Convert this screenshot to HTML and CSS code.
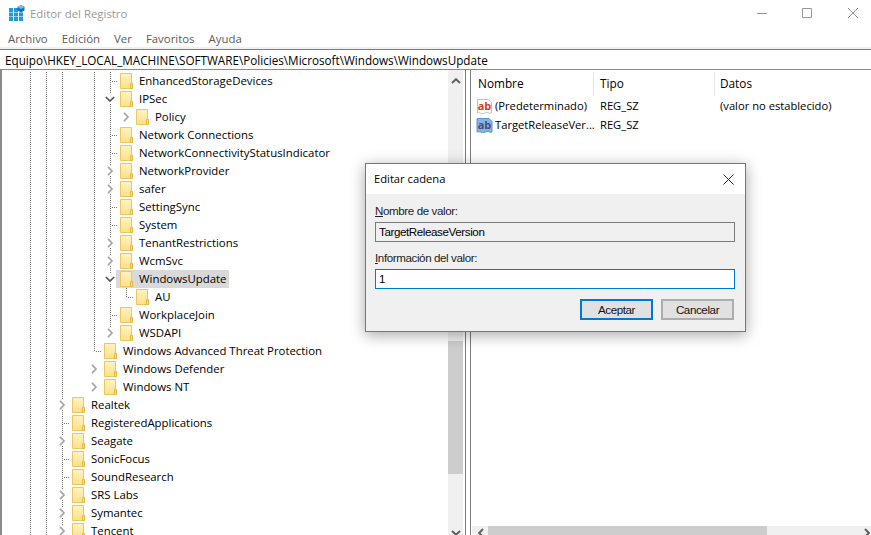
FILE: index.html
```html
<!DOCTYPE html>
<html lang="es">
<head>
<meta charset="utf-8">
<title>Editor del Registro</title>
<link rel="stylesheet" href="styles.css">
</head>
<body>
<svg class="sprite" aria-hidden="true">
  <symbol id="f" viewBox="0 0 13 16">
    <defs><linearGradient id="fg" x1="0" y1="0" x2="0" y2="1"><stop offset="0" stop-color="#fff3c0"/><stop offset="1" stop-color="#fde08a"/></linearGradient></defs>
    <path d="M.5.5h11v15H.5z" fill="url(#fg)" stroke="#ecc65e"/>
    <path d="M10.5 10.5h2v5h-2z" fill="#fbe08c" stroke="#e5b93f"/>
  </symbol>
  <symbol id="c" viewBox="0 0 6 10"><path d="M1 .8 5 5l-4 4.2" fill="none" stroke="#a6a6a6" stroke-width="1.7"/></symbol>
  <symbol id="o" viewBox="0 0 10 6"><path d="M.8 1 5 5l4.2-4" fill="none" stroke="#555" stroke-width="1.7"/></symbol>
</svg>
<div class="window">
  <header class="titlebar">
    <svg class="appicon" width="16" height="16" viewBox="0 0 16 16">
      <path d="M0 3h4v4H0zM5 3h4v4H5zM0 7.500h4v4H0zM5 7.500h4v4H5zM10 7.500h4v4h-4zM0 12h4v4H0zM5 12h4v4H5zM10 12h4v4h-4z" fill="#1f9bd7"/>
      <path d="M12 0 15.500 2v3.500L12 7.500 8.500 5.500V2z" fill="#1f6fb5"/>
      <path d="M12 0 15.500 2 12 4 8.500 2z" fill="#6fc2ee"/>
    </svg>
    <span class="apptitle">Editor del Registro</span>
    <div class="winbtns">
      <svg width="10" height="10" viewBox="0 0 10 10"><path d="M0 5.500h10" stroke="#999"/></svg>
      <svg width="10" height="10" viewBox="0 0 10 10"><path d="M.5.500h9v9h-9z" fill="none" stroke="#999"/></svg>
      <svg class="winclose" width="10" height="10" viewBox="0 0 10 10"><path d="M0 0l10 10M10 0 0 10" stroke="#999"/></svg>
    </div>
  </header>
  <nav class="menubar">
    <span>Archivo</span><span>Edición</span><span>Ver</span><span>Favoritos</span><span>Ayuda</span>
  </nav>
  <div class="address">Equipo\HKEY_LOCAL_MACHINE\SOFTWARE\Policies\Microsoft\Windows\WindowsUpdate</div>
  <main class="panes">
    <section class="treepane">
      <div class="tree">
        <div class="row"><i class="g"></i><i class="g"></i><i class="g"></i><i></i><i class="g"></i><i class="d"></i><span class="item"><svg class="folder"><use href="#f"/></svg><span>EnhancedStorageDevices</span></span></div>
        <div class="row"><i class="g"></i><i class="g"></i><i class="g"></i><i></i><i class="g"></i><i class="a"><svg class="open"><use href="#o"/></svg></i><span class="item"><svg class="folder"><use href="#f"/></svg><span>IPSec</span></span></div>
        <div class="row"><i class="g"></i><i class="g"></i><i class="g"></i><i></i><i class="g"></i><i class="g"></i><i class="n"><svg class="closed"><use href="#c"/></svg></i><span class="item"><svg class="folder"><use href="#f"/></svg><span>Policy</span></span></div>
        <div class="row"><i class="g"></i><i class="g"></i><i class="g"></i><i></i><i class="g"></i><i class="d"></i><span class="item"><svg class="folder"><use href="#f"/></svg><span>Network Connections</span></span></div>
        <div class="row"><i class="g"></i><i class="g"></i><i class="g"></i><i></i><i class="g"></i><i class="d"></i><span class="item"><svg class="folder"><use href="#f"/></svg><span>NetworkConnectivityStatusIndicator</span></span></div>
        <div class="row"><i class="g"></i><i class="g"></i><i class="g"></i><i></i><i class="g"></i><i class="a"><svg class="closed"><use href="#c"/></svg></i><span class="item"><svg class="folder"><use href="#f"/></svg><span>NetworkProvider</span></span></div>
        <div class="row"><i class="g"></i><i class="g"></i><i class="g"></i><i></i><i class="g"></i><i class="a"><svg class="closed"><use href="#c"/></svg></i><span class="item"><svg class="folder"><use href="#f"/></svg><span>safer</span></span></div>
        <div class="row"><i class="g"></i><i class="g"></i><i class="g"></i><i></i><i class="g"></i><i class="d"></i><span class="item"><svg class="folder"><use href="#f"/></svg><span>SettingSync</span></span></div>
        <div class="row"><i class="g"></i><i class="g"></i><i class="g"></i><i></i><i class="g"></i><i class="d"></i><span class="item"><svg class="folder"><use href="#f"/></svg><span>System</span></span></div>
        <div class="row"><i class="g"></i><i class="g"></i><i class="g"></i><i></i><i class="g"></i><i class="a"><svg class="closed"><use href="#c"/></svg></i><span class="item"><svg class="folder"><use href="#f"/></svg><span>TenantRestrictions</span></span></div>
        <div class="row"><i class="g"></i><i class="g"></i><i class="g"></i><i></i><i class="g"></i><i class="a"><svg class="closed"><use href="#c"/></svg></i><span class="item"><svg class="folder"><use href="#f"/></svg><span>WcmSvc</span></span></div>
        <div class="row"><i class="g"></i><i class="g"></i><i class="g"></i><i></i><i class="g"></i><i class="a"><svg class="open"><use href="#o"/></svg></i><span class="item selected"><svg class="folder"><use href="#f"/></svg><span>WindowsUpdate</span></span></div>
        <div class="row"><i class="g"></i><i class="g"></i><i class="g"></i><i></i><i class="g"></i><i class="g"></i><i class="e"></i><span class="item"><svg class="folder"><use href="#f"/></svg><span>AU</span></span></div>
        <div class="row"><i class="g"></i><i class="g"></i><i class="g"></i><i></i><i class="g"></i><i class="d"></i><span class="item"><svg class="folder"><use href="#f"/></svg><span>WorkplaceJoin</span></span></div>
        <div class="row"><i class="g"></i><i class="g"></i><i class="g"></i><i></i><i class="g"></i><i class="al"><svg class="closed"><use href="#c"/></svg></i><span class="item"><svg class="folder"><use href="#f"/></svg><span>WSDAPI</span></span></div>
        <div class="row"><i class="g"></i><i class="g"></i><i class="g"></i><i></i><i class="e"></i><span class="item"><svg class="folder"><use href="#f"/></svg><span>Windows Advanced Threat Protection</span></span></div>
        <div class="row"><i class="g"></i><i class="g"></i><i class="g"></i><i></i><i class="n"><svg class="closed"><use href="#c"/></svg></i><span class="item"><svg class="folder"><use href="#f"/></svg><span>Windows Defender</span></span></div>
        <div class="row"><i class="g"></i><i class="g"></i><i class="g"></i><i></i><i class="n"><svg class="closed"><use href="#c"/></svg></i><span class="item"><svg class="folder"><use href="#f"/></svg><span>Windows NT</span></span></div>
        <div class="row"><i class="g"></i><i class="g"></i><i class="a"><svg class="closed"><use href="#c"/></svg></i><span class="item"><svg class="folder"><use href="#f"/></svg><span>Realtek</span></span></div>
        <div class="row"><i class="g"></i><i class="g"></i><i class="d"></i><span class="item"><svg class="folder"><use href="#f"/></svg><span>RegisteredApplications</span></span></div>
        <div class="row"><i class="g"></i><i class="g"></i><i class="a"><svg class="closed"><use href="#c"/></svg></i><span class="item"><svg class="folder"><use href="#f"/></svg><span>Seagate</span></span></div>
        <div class="row"><i class="g"></i><i class="g"></i><i class="d"></i><span class="item"><svg class="folder"><use href="#f"/></svg><span>SonicFocus</span></span></div>
        <div class="row"><i class="g"></i><i class="g"></i><i class="d"></i><span class="item"><svg class="folder"><use href="#f"/></svg><span>SoundResearch</span></span></div>
        <div class="row"><i class="g"></i><i class="g"></i><i class="a"><svg class="closed"><use href="#c"/></svg></i><span class="item"><svg class="folder"><use href="#f"/></svg><span>SRS Labs</span></span></div>
        <div class="row"><i class="g"></i><i class="g"></i><i class="a"><svg class="closed"><use href="#c"/></svg></i><span class="item"><svg class="folder"><use href="#f"/></svg><span>Symantec</span></span></div>
        <div class="row"><i class="g"></i><i class="g"></i><i class="a"><svg class="closed"><use href="#c"/></svg></i><span class="item"><svg class="folder"><use href="#f"/></svg><span>Tencent</span></span></div>
      </div>
      <div class="vscroll">
        <svg class="arrow" width="10" height="6" viewBox="0 0 10 6"><path d="M1 5 5 1.200 9 5" fill="none" stroke="#606060" stroke-width="2"/></svg>
        <div class="vthumb"></div>
        <svg class="arrow arrow-down" width="10" height="6" viewBox="0 0 10 6"><path d="M1 1 5 4.800 9 1" fill="none" stroke="#606060" stroke-width="2"/></svg>
      </div>
    </section>
    <section class="listpane">
      <div class="listhead">
        <div class="col col-name">Nombre</div>
        <div class="col col-type">Tipo</div>
        <div class="col col-data">Datos</div>
      </div>
      <div class="listrow">
        <div class="cell-name">
          <svg class="valicon" width="17" height="17" viewBox="0 0 17 17"><path d="M1.500 1.500h11l3 3v10.500c-2 1-3-.8-5-.5s-2.500 1.500-4.500 1-3-1-4.500-.5z" fill="#fff" stroke="#c0c0c0"/><text x="8.500" y="12" class="abred" text-anchor="middle">ab</text></svg>
          <span>(Predeterminado)</span>
        </div>
        <div>REG_SZ</div>
        <div>(valor no establecido)</div>
      </div>
      <div class="listrow">
        <div class="cell-name">
          <svg class="valicon" width="17" height="17" viewBox="0 0 17 17"><path d="M1 1.500h12l3 3v10.500c-2 1-3-.8-5-.5s-2.500 1.500-4.500 1-3.500-1-5.500-.5z" fill="#82b5e6" stroke="#5f93c8"/><text x="8.500" y="12" class="abblue" text-anchor="middle">ab</text></svg>
          <span>TargetReleaseVer...</span>
        </div>
        <div>REG_SZ</div>
        <div></div>
      </div>
      <div class="hscroll">
        <svg width="6" height="9" viewBox="0 0 6 9" class="harrow"><path d="M5 1 1.200 5 5 9" fill="none" stroke="#606060" stroke-width="2"/></svg>
        <div class="hthumb"></div>
        <svg width="6" height="9" viewBox="0 0 6 9" class="harrow harrow-r"><path d="M1 1 4.800 5 1 9" fill="none" stroke="#606060" stroke-width="2"/></svg>
      </div>
    </section>
  </main>
  <div class="dialog" role="dialog">
    <div class="dlgtitle">
      <span>Editar cadena</span>
      <svg width="11" height="11" viewBox="0 0 11 11"><path d="M.5.500l10 10M10.500.500l-10 10" stroke="#222" stroke-width="1"/></svg>
    </div>
    <div class="dlgbody">
      <label class="lbl"><u>N</u>ombre de valor:</label>
      <div class="field field-ro">TargetReleaseVersion</div>
      <label class="lbl lbl2"><u>I</u>nformación del valor:</label>
      <div class="field field-on">1</div>
      <div class="btnrow">
        <button class="btn btn-default">Aceptar</button>
        <button class="btn">Cancelar</button>
      </div>
    </div>
  </div>
</div>
</body>
</html>
```
FILE: styles.css
```css
* { box-sizing: border-box; }
html, body { margin: 0; height: 100%; overflow: hidden; background: #fff; }
body { font: 11.4px/16px "Open Sans", "Noto Sans", sans-serif; color: #000; }
.sprite { width: 0; height: 0; display: block; }
.window { position: relative; height: 535px; display: flex; flex-direction: column; overflow: hidden; }

.titlebar { height: 30px; display: flex; align-items: flex-start; padding: 5px 13px 0 9px; flex: none; }
.appicon { flex: none; }
.apptitle { margin-left: 5px; color: #999; line-height: 18px; }
.winbtns { margin-left: auto; display: flex; gap: 35px; padding-top: 3px; margin-right: 0; }
.winclose { margin-left: 1px; }

.menubar { height: 19px; display: flex; gap: 14px; padding: 0 0 0 8px; color: #5c5c5c; line-height: 18px; flex: none; border-bottom: 2px solid #f0f0f0; }

.address { height: 21px; flex: none; border-top: 1px solid #7c7c7c; border-bottom: 1px solid #8c8c8c; padding-left: 5px; font-size: 11.7px; line-height: 20px; color: #000; white-space: nowrap; }

.panes { flex: 1; min-height: 0; display: flex; }

.treepane { width: 466px; flex: none; display: flex; border-left: 2px solid #8a8a8a; border-right: 1px solid #7c7c7c; padding-right: 2px; }
.tree { flex: 1; min-width: 0; padding: 2px 0 0 20px; overflow: hidden; }
.row { height: 18px; display: flex; white-space: nowrap; }
.row > i { width: 16px; flex: none; height: 18px; display: flex; align-items: center; justify-content: center; }
.g, .d, .a { background: repeating-linear-gradient(#777 0 1px, transparent 1px 2px) no-repeat 8px 0 / 1px 100%; }
.d { background:
  repeating-linear-gradient(90deg, #777 0 1px, transparent 1px 2px) no-repeat 10px 9px / 6px 1px,
  repeating-linear-gradient(#777 0 1px, transparent 1px 2px) no-repeat 8px 0 / 1px 100%; }
.e { background:
  repeating-linear-gradient(90deg, #777 0 1px, transparent 1px 2px) no-repeat 10px 9px / 6px 1px,
  repeating-linear-gradient(#777 0 1px, transparent 1px 2px) no-repeat 8px 0 / 1px 10px; }
.a { background:
  linear-gradient(#fff, #fff) no-repeat center / 12px 10px,
  repeating-linear-gradient(#777 0 1px, transparent 1px 2px) no-repeat 8px 0 / 1px 100%; }
.al { background: repeating-linear-gradient(#777 0 1px, transparent 1px 2px) no-repeat 8px 0 / 1px 4px; }
.closed { width: 6px; height: 10px; }
.open { width: 10px; height: 6px; }
.item { display: flex; align-items: flex-start; gap: 6px; margin-left: -2px; padding: 0 3px 0 4px; height: 18px; line-height: 18px; color: #000; }
.item.selected { background: #d9d9d9; }
.folder { width: 13px; height: 16px; flex: none; margin-top: 1px; }

.vscroll { width: 15px; flex: none; background: #f0f0f0; display: flex; flex-direction: column; align-items: center; padding-top: 8px; }
.arrow { flex: none; }
.vthumb { width: 15px; height: 133px; background: #cdcdcd; margin-top: 257px; flex: none; }
.arrow-down { margin-top: auto; margin-bottom: -1px; }

.listpane { flex: 1; min-width: 0; margin-left: 4px; border-left: 1px solid #7c7c7c; display: flex; flex-direction: column; padding-top: 2px; }
.listhead { height: 24px; display: flex; flex: none; line-height: 22px; font-size: 11.8px; }
.col { border-right: 1px solid #e5e5e5; }
.col-name { width: 123px; padding-left: 7px; }
.col-type { width: 121px; padding-left: 6px; }
.col-data { flex: 1; border: 0; padding-left: 5px; }
.listrow { height: 19px; display: grid; grid-template-columns: 122px 120px 1fr; line-height: 20px; flex: none; font-size: 11.2px; }
.listrow > div { padding-left: 7px; white-space: nowrap; }
.listrow > .cell-name { display: flex; align-items: center; gap: 2px; padding-left: 5px; }
.valicon { flex: none; }
.abred, .abblue { font: bold 11px "Open Sans", sans-serif; }
.abred { fill: #d83b1f; }
.abblue { fill: #4a4a7c; }

.hscroll { margin-top: auto; height: 9px; flex: none; margin-left: 1px; background: #f0f0f0; display: flex; align-items: flex-start; padding-left: 6px; overflow: hidden; }
.harrow { flex: none; margin-top: 2px; }
.hthumb { width: 279px; height: 17px; background: #cdcdcd; margin-left: 4px; flex: none; }
.harrow-r { margin-left: auto; margin-right: 1px; }

.dialog { position: absolute; left: 365px; top: 163px; width: 381px; height: 169px; background: #f0f0f0; border: 1px solid #777; box-shadow: 0 3px 14px rgba(0,0,0,.35); display: flex; flex-direction: column; }
.dlgtitle { height: 30px; background: #fff; display: flex; align-items: center; justify-content: space-between; padding: 0 11px 0 8px; flex: none; color: #000; font-size: 11.2px; }
.dlgbody { padding: 9px 10px 0 9px; display: flex; flex-direction: column; flex: 1; font-family: "Liberation Sans", Arial, sans-serif; font-size: 11.6px; letter-spacing: -.4px; }
.lbl { height: 17px; line-height: 16px; color: #222; }
.lbl2 { margin-top: 7px; height: 20px; line-height: 18px; }
.field { height: 20px; flex: none; width: 360px; border: 1px solid #7a7a7a; padding-left: 3px; line-height: 18px; }
.field-ro { background: #f0f0f0; margin-top: 2px; }
.field-on { background: #fff; border-color: #0078d7; }
.btnrow { display: flex; justify-content: flex-end; gap: 8px; margin-top: 10px; padding-right: 1px; }
.btn { width: 73px; height: 21px; background: #e1e1e1; border: 2px solid #adadad; padding: 0; font: inherit; letter-spacing: inherit; color: #111; line-height: 16px; }
.btn-default { border-color: #0078d7; }
```
